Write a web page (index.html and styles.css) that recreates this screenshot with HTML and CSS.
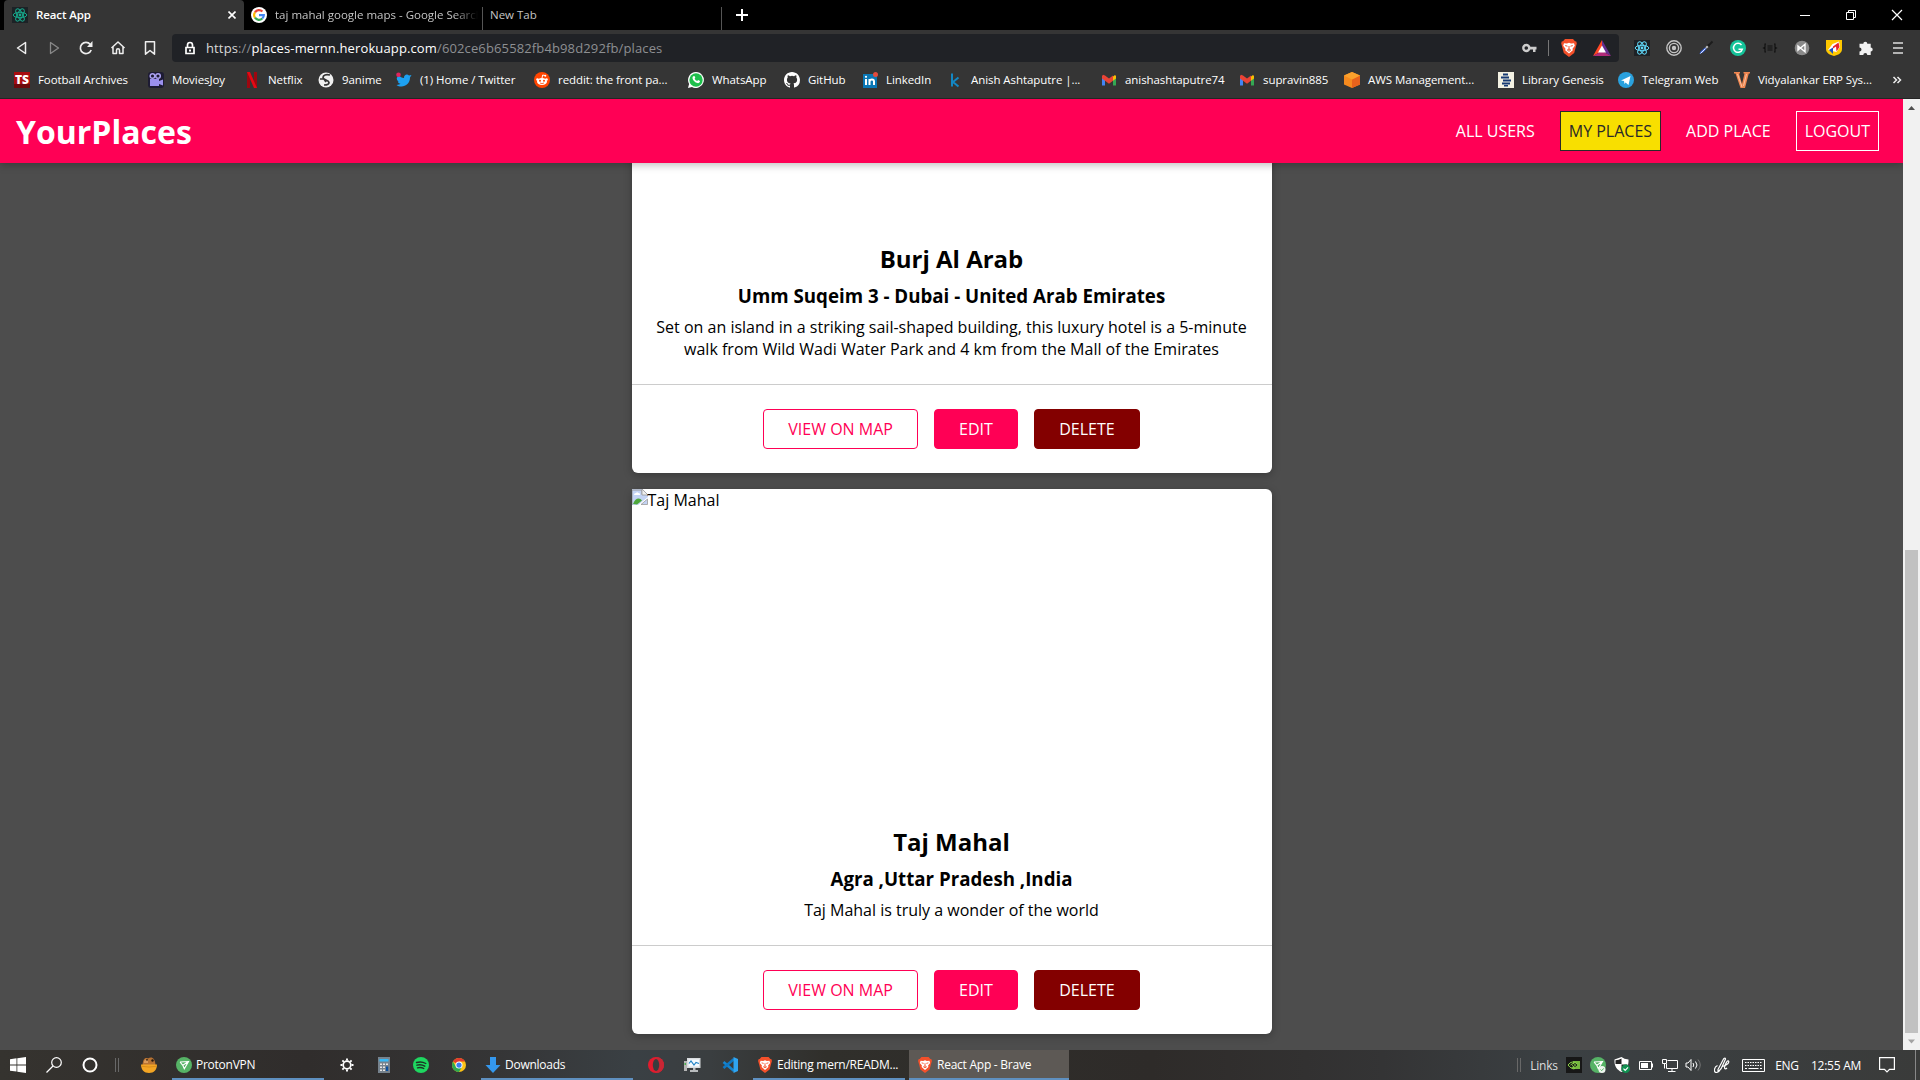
FILE: index.html
```html
<!DOCTYPE html>
<html lang="en">
<head>
<meta charset="utf-8">
<title>React App</title>
<link rel="stylesheet" href="styles.css">
</head>
<body>
<svg class="defs" width="0" height="0">
  <symbol id="brave" viewBox="0 0 16 18"><path d="M4 0h8l2 2.200 1.300.3.500 2-1 3.500-1.600 6L8 18l-5.200-4L1.200 8 .2 4.500l.5-2L2 2.200z" fill="#f4502a"/><path d="M3 4.200l3 .3 2-.8 2 .8 3-.3.800 2.500-2.300 3 .3 1.600L8 14.500l-3.800-3.200.3-1.600-2.300-3z" fill="#fff"/><path d="M4.200 6.600l2.300.6M11.800 6.600l-2.300.6M8 7v3M6.300 11L8 10l1.700 1L8 12.300z" stroke="#f4502a" fill="none"/></symbol>
  <symbol id="react" viewBox="0 0 16 16"><g fill="none" stroke="currentColor"><ellipse cx="8" cy="8" rx="6.800" ry="2.700"/><ellipse cx="8" cy="8" rx="6.800" ry="2.700" transform="rotate(60 8 8)"/><ellipse cx="8" cy="8" rx="6.800" ry="2.700" transform="rotate(120 8 8)"/></g><circle cx="8" cy="8" r="1.400" fill="currentColor"/></symbol>
  <symbol id="gmail" viewBox="0 0 16 16"><path d="M1 4v9.500h3V6z" fill="#4285f4"/><path d="M15 4v9.500h-3V6z" fill="#34a853"/><path d="M12 4.500L14 3l1 1v2.500l-3 2.300z" fill="#fbbc04"/><path d="M1 4l1-1.200 2 .7 4 3 4-3v5.300l-4 3-4-3L1 6.500z" fill="#ea4335"/></symbol>
  <symbol id="proton" viewBox="0 0 16 16"><circle cx="8" cy="8" r="8" fill="#56b366"/><path d="M4 5l8.500-.5-4.200 7.200L6.800 8.300 4 5M6.800 8.300l5.700-3.800" fill="none" stroke="#fff" stroke-width="1.100"/></symbol>
</svg>
<div class="screen">
  <div class="tabs">
    <div class="tab tab-active"><svg class="fav dark-fav" width="16" height="16"><use href="#react"/></svg><span>React App</span><svg class="tab-x" width="8" height="8" viewBox="0 0 8 8"><path d="M.5.5l7 7M7.500.5l-7 7" stroke="#fff" stroke-width="1.600"/></svg></div>
    <div class="tab tab-google"><svg width="16" height="16" viewBox="0 0 16 16"><circle cx="8" cy="8" r="8" fill="#fff"/><g fill="none" stroke-width="2.200"><path d="M4 5.300A4.800 4.800 0 0 1 11.400 4.600" stroke="#ea4335"/><path d="M4 5.300a4.800 4.800 0 0 0 0 5.400" stroke="#fbbc05"/><path d="M4 10.700a4.800 4.800 0 0 0 7.300.8" stroke="#34a853"/><path d="M11.300 11.500A4.800 4.800 0 0 0 12.800 8.200H8" stroke="#4285f4"/></g></svg><span class="fade">taj mahal google maps - Google Search</span></div>
    <div class="tab tab-new"><span>New Tab</span></div>
    <svg class="plus" width="12" height="12" viewBox="0 0 12 12"><path d="M6 0v12M0 6h12" stroke="#fff" stroke-width="2"/></svg>
    <div class="win">
      <svg width="12" height="12" viewBox="0 0 12 12"><path d="M1 6.500h10" stroke="#fff"/></svg>
      <svg width="12" height="12" viewBox="0 0 12 12"><path d="M1.500 3.500h7v7h-7zM3.500 3.500v-2h7v7h-2" fill="none" stroke="#fff"/></svg>
      <svg width="12" height="12" viewBox="0 0 12 12"><path d="M1 1l10 10M11 1L1 11" stroke="#fff" stroke-width="1.200"/></svg>
    </div>
  </div>
  <div class="toolbar">
    <div class="cells">
      <svg width="16" height="16" viewBox="0 0 16 16"><path d="M11.500 2.500v11L3.500 8z" fill="none" stroke="#eee" stroke-width="1.500" stroke-linejoin="round"/></svg>
      <svg width="16" height="16" viewBox="0 0 16 16"><path d="M4.500 2.500v11l8-5.500z" fill="none" stroke="#888" stroke-width="1.300" stroke-linejoin="round"/></svg>
      <svg width="16" height="16" viewBox="0 0 16 16"><path d="M13.200 10A5.600 5.600 0 1 1 12.300 4.500" fill="none" stroke="#eee" stroke-width="1.700"/><path d="M14.500 1v6H9z" fill="#eee"/></svg>
      <svg width="16" height="16" viewBox="0 0 16 16"><path d="M1.500 8L8 2l6.500 6M3 7v6.500h3.500V10.300a1.500 1.500 0 0 1 3 0v3.200H13V7" fill="none" stroke="#eee" stroke-width="1.500" stroke-linejoin="round"/></svg>
      <svg width="16" height="16" viewBox="0 0 16 16"><path d="M3.500 1.800h9v12.400L8 10.500l-4.500 3.700z" fill="none" stroke="#eee" stroke-width="1.500" stroke-linejoin="round"/></svg>
    </div>
    <div class="url">
      <svg class="lock" width="12" height="14" viewBox="0 0 12 14"><path d="M3.500 6V4a2.500 2.500 0 0 1 5 0v2M2 6.500h8v6H2z" fill="none" stroke="#fff" stroke-width="1.700"/><path d="M6 8.500v2" stroke="#fff" stroke-width="2"/></svg>
      <span class="address"><i>https</i>://<b>places-mernn.herokuapp.com</b>/602ce6b65582fb4b98d292fb/places</span>
      <svg class="key" width="15" height="12" viewBox="0 0 15 12"><path d="M7 4.700h7.500v2.800H13.500V10H11V7.500H7" fill="#ccc"/><circle cx="4.300" cy="6" r="3" fill="none" stroke="#ccc" stroke-width="2.400"/></svg>
      <span class="vbar"></span>
      <svg class="shield" width="16" height="18"><use href="#brave"/></svg>
      <svg width="18" height="16" viewBox="0 0 18 16"><path d="M9 0l9 16-9-5z" fill="#662d91"/><path d="M9 0L0 16l9-5z" fill="#ff4724"/><path d="M0 16h18l-9-5z" fill="#b12a7a"/><path d="M9 5.500l4 7H5z" fill="#fff"/></svg>
    </div>
    <div class="cells ext">
      <svg class="dark-fav blue" width="16" height="16"><use href="#react"/></svg>
      <svg width="16" height="16" viewBox="0 0 16 16"><g fill="none" stroke="#c4c4c4" stroke-width="1.400"><circle cx="8" cy="8" r="7.200"/><circle cx="8" cy="8" r="4.600"/></g><circle cx="8" cy="8" r="2.200" fill="#c4c4c4"/></svg>
      <svg width="16" height="16" viewBox="0 0 16 16"><path d="M1.500 14l1-2.500L7 7.500 8.500 9 5 12.500z" fill="#3a63d8"/><path d="M2.500 13.500l5-5" stroke="#e4e9ff"/><path d="M8 8l2.500-2.500" stroke="#bbb" stroke-width="2"/><path d="M9.500 4.500l2 2M11 5l3.500-3.500" stroke="#1c1c1c" stroke-width="1.800"/></svg>
      <svg width="16" height="16" viewBox="0 0 16 16"><circle cx="8" cy="8" r="8" fill="#15c39a"/><path d="M11.500 5a4.500 4.500 0 1 0 .8 4.200H8.500" fill="none" stroke="#fff" stroke-width="1.500"/></svg>
      <svg width="16" height="16" viewBox="0 0 16 16"><path d="M4 4H3v3.300L1.700 8 3 8.700V12h1M12 4h1v3.300l1.300.7-1.300.7V12h-1M5.500 6h5M5.500 8h5M5.500 10h5" fill="none" stroke="#111" stroke-width="1.200"/></svg>
      <svg width="16" height="16" viewBox="0 0 16 16"><circle cx="8" cy="8" r="7.300" fill="#8a8a8a"/><path d="M4 6v4.200L6.300 8zM6.500 8L11 4.300v7.400z" fill="none" stroke="#fff" stroke-width="1.400"/></svg>
      <svg width="16" height="16" viewBox="0 0 16 16"><path d="M0 0h16v9c0 4-4 6-8 7-4-1-8-3-8-7z" fill="#ffc800"/><path d="M2 10L6.500 4l6.500-2.500 1 5.500-3.500 5z" fill="#fff"/><path d="M7 6.500L12.500 2.500 13.500 7l-3 4.500-.5-5-3 2z" fill="#e8232c"/><path d="M7 7.500L3 10l4 4z" fill="#1b4fc4"/></svg>
      <svg width="16" height="16" viewBox="0 0 16 16"><path d="M1.500 3.800h3.800a2 2 0 1 1 4 0h3.400v3.700a2 2 0 1 1 0 4v3.500H9.300a2 2 0 0 0-4 0H1.500v-3.500a2 2 0 0 0 0-4z" fill="#f2f2f2"/></svg>
      <svg width="16" height="16" viewBox="0 0 16 16"><path d="M3 3h10M3 8h10M3 13h10" stroke="#ddd" stroke-width="1.700"/></svg>
    </div>
  </div>
  <div class="bookmarks">
    <div class="bm"><svg width="16" height="16" viewBox="0 0 16 16"><path d="M0 0h16v16H0z" fill="#a80d10"/><path d="M0 12h16v4H0z" fill="#6d0a0c"/><text class="ts" x="8" y="11.500" text-anchor="middle">TS</text></svg><span>Football Archives</span></div>
    <div class="bm"><svg width="16" height="16" viewBox="0 0 16 16"><rect width="16" height="16" rx="3" fill="#1d1b33"/><circle cx="4.500" cy="4" r="2.300" fill="none" stroke="#aaa1f0" stroke-width="1.500"/><circle cx="10" cy="4" r="2.300" fill="none" stroke="#aaa1f0" stroke-width="1.500"/><path d="M2 7h9v2l4-1.500v6L11 12v2H2z" fill="#9b90ee"/></svg><span>MoviesJoy</span></div>
    <div class="bm"><svg width="16" height="16" viewBox="0 0 16 16"><path d="M3 0h3v16H3zM10 0h3v16h-3z" fill="#9d0710"/><path d="M3 0h3l7 16h-3z" fill="#e50914"/></svg><span>Netflix</span></div>
    <div class="bm"><svg width="16" height="16" viewBox="0 0 16 16"><circle cx="8" cy="8" r="7.500" fill="#f0f0f0"/><path d="M12 3c-4-1-7 0-7 2.500S11 8 11 10.500 8 13 6 13M2 7h4l2 3" fill="none" stroke="#333" stroke-width="1.700"/></svg><span>9anime</span></div>
    <div class="bm"><svg width="16" height="16" viewBox="0 0 16 16"><path d="M2.500 3C4 5 6 6 8 6c-.3-3 3-4.500 5-2.500L15.500 3 14 5.500C14 11 10 14.500 5.500 14.500c-2 0-3.500-.5-5-1.500 2 0 3-.5 4-1.200C3 11.500 2 10.500 1.800 9.500h1C1 8.500.8 7.500.8 6z" fill="#1da1f2"/><circle cx="2.500" cy="2.700" r="2.300" fill="#e0245e"/></svg><span>(1) Home / Twitter</span></div>
    <div class="bm"><svg width="16" height="16" viewBox="0 0 16 16"><circle cx="8" cy="8" r="8" fill="#ff4500"/><ellipse cx="8" cy="9.500" rx="5" ry="3.600" fill="#fff"/><circle cx="3.500" cy="7.500" r="1.300" fill="#fff"/><circle cx="12.500" cy="7.500" r="1.300" fill="#fff"/><path d="M8 6l.7-3 2.300.5" stroke="#fff" fill="none"/><circle cx="11.300" cy="3.700" r="1" fill="#fff"/><circle cx="6" cy="8.800" r="1" fill="#ff4500"/><circle cx="10" cy="8.800" r="1" fill="#ff4500"/><path d="M6 11q2 1.200 4 0" stroke="#ff4500" fill="none" stroke-width=".8"/></svg><span>reddit: the front pa...</span></div>
    <div class="bm"><svg width="16" height="16" viewBox="0 0 16 16"><path d="M8 0a8 8 0 1 1-4 15L0 16l1.100-4A8 8 0 0 1 8 0z" fill="#fff"/><circle cx="8" cy="8" r="6.700" fill="#1fc04c"/><path d="M5.300 4.200L6.500 4l.8 1.800-.7 1c.6 1.100 1.500 1.800 2.600 2.300l.9-1 1.900.9c0 1.500-1.300 2.300-2.500 2.100C7 10.600 5 8.600 4.500 6.300c-.1-.9.300-1.700.8-2.100z" fill="#fff"/></svg><span>WhatsApp</span></div>
    <div class="bm"><svg width="16" height="16" viewBox="0 0 16 16"><path d="M8 0C3.580 0 0 3.580 0 8c0 3.540 2.290 6.530 5.470 7.590.4.070.55-.17.55-.38 0-.19-.01-.82-.01-1.490-2.010.37-2.530-.49-2.690-.94-.09-.23-.48-.94-.82-1.130-.28-.15-.68-.52-.01-.53.63-.01 1.080.58 1.230.82.72 1.210 1.870.87 2.330.66.07-.52.28-.87.510-1.070-1.780-.2-3.640-.89-3.640-3.950 0-.87.31-1.590.82-2.150-.08-.2-.36-1.020.08-2.120 0 0 .67-.21 2.200.82a7.600 7.600 0 0 1 4 0c1.530-1.040 2.200-.82 2.200-.82.44 1.100.16 1.920.08 2.120.51.56.82 1.270.82 2.150 0 3.070-1.870 3.750-3.650 3.950.29.25.54.73.54 1.480 0 1.070-.01 1.930-.01 2.200 0 .21.15.46.55.38A8 8 0 0 0 16 8c0-4.420-3.580-8-8-8z" fill="#fff"/></svg><span>GitHub</span></div>
    <div class="bm"><svg width="16" height="16" viewBox="0 0 16 16"><path d="M1 2h14v14H1z" fill="#0a77b5"/><path d="M4 7v6M7.500 7v6M7.500 9.500C8 6.800 12 6.800 12 9.500V13" fill="none" stroke="#fff" stroke-width="2"/><circle cx="4" cy="4.800" r="1.100" fill="#fff"/><circle cx="13.500" cy="2.500" r="2.500" fill="#e34b3d"/></svg><span>LinkedIn</span></div>
    <div class="bm"><svg width="16" height="16" viewBox="0 0 16 16"><path d="M5 1.500v13M11.500 5.500L6 10l5.500 4.500" fill="none" stroke="#1387c4" stroke-width="2"/></svg><span>Anish Ashtaputre |...</span></div>
    <div class="bm"><svg width="16" height="16"><use href="#gmail"/></svg><span>anishashtaputre74</span></div>
    <div class="bm"><svg width="16" height="16"><use href="#gmail"/></svg><span>supravin885</span></div>
    <div class="bm"><svg width="16" height="16" viewBox="0 0 16 16"><path d="M8 0l8 3.500v9L8 16l-8-3.500v-9z" fill="#f68a1e"/><path d="M8 7.500l8-4v9L8 16z" fill="#e8621c"/><path d="M0 3.500L8 0l8 3.500-8 4z" fill="#fba12c"/></svg><span>AWS Management...</span></div>
    <div class="bm"><svg width="16" height="16" viewBox="0 0 16 16"><path d="M0 0h16v16H0z" fill="#f3f1e2"/><path d="M5 1.500h5v2H5zM3 4.500h8v2H3zM5 7.500h8v2H5zM4 10.500h8v2H4zM6 13h4v1.500H6z" fill="#173a73"/></svg><span>Library Genesis</span></div>
    <div class="bm"><svg width="16" height="16" viewBox="0 0 16 16"><circle cx="8" cy="8" r="8" fill="#2aa1de"/><path d="M3 8.500L12.500 4l-2 9-3-2.500-1 1.500-.5-3z" fill="#fff"/></svg><span>Telegram Web</span></div>
    <div class="bm"><svg width="16" height="16" viewBox="0 0 16 16"><path d="M0 0h6v1.500H5L8 12l2.500-10.500H9.500V0H16v1.500h-1.200L11 16H6.500L1.500 1.500H0z" fill="#f08650"/><path d="M3.500 2L8 15M12.500 2L9.500 14" stroke="#fbd0b5" stroke-width=".8"/></svg><span>Vidyalankar ERP Sys...</span></div>
    <svg class="more" width="10" height="10" viewBox="0 0 10 10"><path d="M1.500 2l3 3-3 3M5.500 2l3 3-3 3" fill="none" stroke="#eee" stroke-width="1.500"/></svg>
  </div>
  <div class="viewport">
    <div class="page">
      <header class="header"><h1>YourPlaces</h1><nav><a>ALL USERS</a><a class="current">MY PLACES</a><a>ADD PLACE</a><a class="outlined">LOGOUT</a></nav></header>
      <main class="places">
        <article class="card">
          <div class="photo"></div>
          <div class="info"><h2>Burj Al Arab</h2><h3>Umm Suqeim 3 - Dubai - United Arab Emirates</h3><p>Set on an island in a striking sail-shaped building, this luxury hotel is a 5-minute walk from Wild Wadi Water Park and 4 km from the Mall of the Emirates</p></div>
          <div class="actions"><button class="btn inverse">VIEW ON MAP</button><button class="btn">EDIT</button><button class="btn danger">DELETE</button></div>
        </article>
        <article class="card">
          <div class="photo"><svg width="16" height="16" viewBox="0 0 16 16"><path d="M0 0h10.500L16 5.500V8L6 16H0z" fill="#c3d3f4"/><path d="M0 16V1h10v4.500h5.500V7" fill="none" stroke="#9a9a9a"/><path d="M10 0v6h6z" fill="#eee" stroke="#9a9a9a" stroke-width=".8"/><path d="M2 6q0-2 2-2 1-1.500 2.500 0 2 0 1.500 2z" fill="#fff"/><path d="M1 15q3-7 7.500-5L10 11.500 5 15.500z" fill="#4ea83c"/><path d="M15.500 10v5.500H9z" fill="#c3d3f4" stroke="#9a9a9a" stroke-width=".8"/></svg><span>Taj Mahal</span></div>
          <div class="info"><h2>Taj Mahal</h2><h3>Agra ,Uttar Pradesh ,India</h3><p>Taj Mahal is truly a wonder of the world</p></div>
          <div class="actions"><button class="btn inverse">VIEW ON MAP</button><button class="btn">EDIT</button><button class="btn danger">DELETE</button></div>
        </article>
      </main>
    </div>
    <div class="scrollbar"><svg width="17" height="17" viewBox="0 0 17 17"><path d="M5 11h7L8.500 7z" fill="#505050"/></svg><div class="thumb"></div><svg width="17" height="17" viewBox="0 0 17 17"><path d="M5 6.500h7l-3.500 4z" fill="#a3a3a3"/></svg></div>
  </div>
  <footer class="taskbar">
    <div class="tasks">
      <div><svg width="16" height="16" viewBox="0 0 16 16"><path d="M0 2.200L6.500 1.300v6.200H0zM7.300 1.200L16 0v7.500H7.300zM0 8.400h6.500v6.200L0 13.700zM7.300 8.400H16V16l-8.700-1.200z" fill="#fff"/></svg></div>
      <div><svg width="16" height="16" viewBox="0 0 16 16"><circle cx="10.500" cy="5.500" r="4.800" fill="none" stroke="#fff" stroke-width="1.200"/><path d="M7 9l-6.500 6.500" stroke="#fff" stroke-width="1.300"/></svg></div>
      <div><svg width="16" height="16" viewBox="0 0 16 16"><circle cx="8" cy="8" r="6.500" fill="none" stroke="#fff" stroke-width="2"/></svg></div>
      <div><span class="grip"></span></div>
      <div><svg width="16" height="16" viewBox="0 0 16 16"><path d="M1.500 8C2 2 4 0 7 1.500 10-.5 14 0 14.500 8z" fill="#b87333"/><path d="M3 4q2-3 4-1v3H3z" fill="#d99a5b"/><circle cx="11.500" cy="3.500" r="1.200" fill="#26180c"/><circle cx="6" cy="2.800" r=".9" fill="#26180c"/><path d="M0 7.500h16c0 5-3 8.500-8 8.500S0 12.500 0 7.500z" fill="#f3a524"/><path d="M1 9.300q7 1.500 14 0" fill="none" stroke="#d98d1b"/></svg></div>
      <div></div>
      <div class="task"><svg width="16" height="16"><use href="#proton"/></svg><span>ProtonVPN</span></div>
      <div></div>
      <div><svg width="14" height="14" viewBox="0 0 14 14"><circle cx="7" cy="7" r="3.800" fill="none" stroke="#fff" stroke-width="1.700"/><path d="M7 .5v2M7 11.500v2M.5 7h2M11.500 7h2M2.400 2.400l1.400 1.400M10.200 10.200l1.400 1.400M11.600 2.400l-1.400 1.400M3.800 10.200l-1.400 1.400" stroke="#fff" stroke-width="1.900"/></svg></div>
      <div><svg width="12" height="16" viewBox="0 0 12 16"><path d="M0 0h12v16H0z" fill="#76828d"/><path d="M1.500 2h9v2.500h-9z" fill="#35b8f5"/><path d="M2 6.500h2V8H2zM5 6.500h2V8H5zM8 6.500h2V8H8zM2 9.500h2V11H2zM5 9.500h2V11H5zM2 12.500h2V14H2zM5 12.500h2V14H5z" fill="#e6e6e6"/><path d="M8 9.500h2.200v4.500H8z" fill="#0b4f9e"/></svg></div>
      <div><svg width="16" height="16" viewBox="0 0 16 16"><circle cx="8" cy="8" r="8" fill="#1ed760"/><path d="M3.500 5.500Q8.500 4 12.800 6.500M4 8.200q4-1.300 7.800 1M4.500 10.800q3.500-1 6.300.7" fill="none" stroke="#1d3323" stroke-width="1.400" stroke-linecap="round"/></svg></div>
      <div><svg width="14" height="14" viewBox="0 0 16 16"><circle cx="8" cy="8" r="8" fill="#fbc116"/><path d="M8 8L1.100 4A8 8 0 0 1 15 4H8z" fill="#e33b2e"/><path d="M1.100 4A8 8 0 0 0 8 16l3.500-6L8 8 4.500 10z" fill="#2da94f"/><circle cx="8" cy="8" r="4" fill="#fff"/><circle cx="8" cy="8" r="3" fill="#3b7ded"/></svg></div>
      <div></div>
      <div class="task"><svg width="16" height="16" viewBox="0 0 16 16"><path d="M5 0h6v8h4.500L8 16 .5 8H5z" fill="#3498ee"/></svg><span>Downloads</span></div>
      <div></div>
      <div><svg width="16" height="16" viewBox="0 0 16 16"><circle cx="8" cy="8" r="8" fill="#e31b2d"/><path d="M8 0a8 8 0 0 1 0 16z" fill="#c92634"/><ellipse cx="8" cy="8" rx="3.200" ry="6" fill="#3a3c3e"/></svg></div>
      <div><svg width="17" height="16" viewBox="0 0 17 16"><path d="M0 4h3v10H0z" fill="#b5b5b5"/><path d="M3 1h13.500v10H3z" fill="#d8dcdf"/><path d="M4.500 2.500H15v7H4.500z" fill="#f5fbff"/><path d="M5 6.500l2-2.500 3 4 2-2.500 3 1" fill="none" stroke="#2183c5" stroke-width="1.200"/><path d="M9 11h2.500v2H14v2H6v-2h3z" fill="#b9bcbe"/><path d="M.5 6h1.500v2H.5z" fill="#4caf50"/></svg></div>
      <div><svg width="16" height="16" viewBox="0 0 16 16"><path d="M1.500 5L12 14" stroke="#1485d0" stroke-width="2.600"/><path d="M1.500 11L12 2" stroke="#0e78c4" stroke-width="2.600"/><path d="M11.500 0L16 2v12l-4.500 2z" fill="#2fa5f2"/></svg></div>
      <div></div>
      <div class="task"><svg width="16" height="16"><use href="#brave"/></svg><span>Editing mern/READM...</span></div>
      <div></div>
      <div class="task task-active"><svg width="16" height="16"><use href="#brave"/></svg><span>React App - Brave</span></div>
    </div>
    <div class="tray">
      <div><span class="grip"></span></div>
      <div class="links">Links</div>
      <div><svg width="16" height="16" viewBox="0 0 16 16"><path d="M0 0h16v16H0z" fill="#171717"/><path d="M7 4h7v8H7z" fill="#76b83f"/><path d="M2 8q4-5.500 9-1-2 4-5.500 3.500M2 8q4 5 7 3.500M4.500 8Q7 5 9 7.500 7.500 10 6 8" fill="none" stroke="#8bd448"/><path d="M7 8q2-3 4 0-2 3-4 0" fill="none" stroke="#171717"/></svg></div>
      <div><svg width="16" height="16"><use href="#proton"/><circle cx="12" cy="12.500" r="3.500" fill="#eef7ef"/><path d="M10.500 12.500l1.200 1.200 2-2.300" fill="none" stroke="#56b366"/></svg></div>
      <div><svg width="16" height="16" viewBox="0 0 16 16"><path d="M7.500 0Q10 2 14.500 2.500C15 9 12 13 7.500 15 3 13 0 9 .5 2.500 5 2 7.500 0z" fill="#fff"/><path d="M7.500 1.500V7H1.500V3.200Q5 3 7.500 1.500zM7.500 7.500h6q-1 4.500-6 6.500z" fill="#222"/><circle cx="11.700" cy="11.700" r="4.300" fill="#109050"/><path d="M9.500 11.700l1.700 1.700 2.800-3" fill="none" stroke="#fff" stroke-width="1.200"/></svg></div>
      <div><svg width="16" height="16" viewBox="0 0 16 16"><path d="M1.500 4.500h12v8h-12zM14.500 6.500v4" fill="none" stroke="#fff"/><path d="M3 6h7v5H3z" fill="#fff"/></svg></div>
      <div><svg width="16" height="16" viewBox="0 0 16 16"><path d="M5.500 3.500h10v8h-11V7M10 11.500v3M6 14.500h7.500M.5 2.500h4v4h-4zM2.500 6.500v5" fill="none" stroke="#fff"/></svg></div>
      <div><svg width="17" height="16" viewBox="0 0 17 16"><path d="M1 6h2l3-3.500v11L3 10H1z" fill="none" stroke="#fff"/><path d="M8 6q1.500 2 0 4M10.500 4.500q3 3.500 0 7" fill="none" stroke="#fff"/><path d="M13 2.500q4.500 5.500 0 11" fill="none" stroke="#777"/></svg></div>
      <div><svg width="16" height="16" viewBox="0 0 16 16"><path d="M4 12.500L9.500 2q2-2 2 0L7 12l-3 2.500zM3.500 8.500C0 10-.5 15 2 15.500c2.500 0 4-2 5-4M8.500 9.500c5-1.500 7-4 6-5.500-1-1-3.500 3-4 6.500 0 2 1.500 1.500 2.500.5" fill="none" stroke="#fff" stroke-width="1.200"/></svg></div>
      <div><svg width="23" height="13" viewBox="0 0 23 13"><path d="M.5.5h22v12H.5z" fill="none" stroke="#fff"/><path d="M3 3.500h17M3 6.500h17" stroke="#fff" stroke-dasharray="1.500 1"/><path d="M3 9.500h2M6.500 9.500h10M18 9.500h2" stroke="#fff"/></svg></div>
      <div>ENG</div>
      <div>12:55 AM</div>
      <div><svg width="16" height="16" viewBox="0 0 16 16"><path d="M.6.600h14.800v11.800H10.500L8 15l-2.500-2.600H.6z" fill="none" stroke="#fff" stroke-width="1.200"/></svg></div>
      <div class="peek"></div>
    </div>
  </footer>
</div>
</body>
</html>
```
FILE: styles.css
```css
* { box-sizing: border-box; }
body { margin: 0; background: #000; font-family: "Open Sans", "Noto Sans", sans-serif; overflow: hidden; }
svg { display: block; flex: none; }
.defs { position: absolute; }
.screen { width: 1920px; height: 1080px; display: flex; flex-direction: column; overflow: hidden; }

/* Browser tabs */
.tabs { flex: none; height: 30px; background: #000; padding-left: 4px; display: flex; align-items: center; color: #c4c4c4; font-size: 11.5px; white-space: nowrap; }
.tab { height: 30px; display: flex; align-items: center; }
.tab span { margin-top: -1px; }
.tab-active { width: 240px; padding: 0 8px; gap: 8px; background: #353535; color: #fff; border-radius: 4px 4px 0 0; font-weight: 600; letter-spacing: -.1px; }
.tab-x { margin-left: auto; }
.tab-google { width: 239px; height: 23px; margin-top: 7px; padding: 0 4px 7px 7px; gap: 8px; border-right: 1px solid #555; }
.fade { width: 203px; overflow: hidden; -webkit-mask-image: linear-gradient(to right, #000 88%, transparent); mask-image: linear-gradient(to right, #000 88%, transparent); }
.tab-new { width: 239px; height: 23px; margin-top: 7px; padding: 0 7px 7px; border-right: 1px solid #555; }
.plus { margin-left: 14px; }
.win { margin-left: auto; width: 138px; display: grid; grid-template-columns: repeat(3, 46px); justify-items: center; }
.dark-fav { background: #1c2226; color: #18a98c; }
.dark-fav.blue { color: #61dafb; background: #1e2125; }

/* Address bar */
.toolbar { flex: none; height: 36px; background: #353535; padding-left: 6px; display: flex; align-items: center; }
.cells { display: grid; grid-auto-flow: column; grid-auto-columns: 32px; justify-items: center; align-items: center; }
.ext { margin-left: 7px; }
.url { width: 1447px; height: 28px; margin-left: 6px; padding: 0 8px 0 12px; background: #202226; border-radius: 4px; display: flex; align-items: center; }
.address { margin-left: 10px; font-size: 13px; letter-spacing: .13px; color: #8d8f92; }
.address i { font-style: normal; color: #d8d8d8; }
.address b { font-weight: 400; color: #fff; }
.key { margin-left: auto; }
.vbar { width: 1px; height: 16px; margin: 0 12px 0 11px; background: #777; }
.shield { margin-right: 16px; }

/* Bookmarks */
.bookmarks { flex: none; height: 33px; padding-left: 14px; padding-bottom: 4px; background: #353535; border-bottom: 1px solid #252525; display: grid; grid-template-columns: 134px 96px 74px 78px 138px 154px 96px 78px 85px 154px 138px 105px 154px 120px 116px 157px auto; align-items: center; color: #fff; font-size: 11.5px; letter-spacing: -.07px; white-space: nowrap; }
.bm { display: flex; align-items: center; gap: 8px; }
.bm span { margin-top: -2px; }
.more { margin-left: 1px; }
.ts { font: 800 12px "Open Sans", sans-serif; fill: #fff; }

/* Page */
.viewport { flex: 1; min-height: 0; display: flex; }
.page { flex: 1; display: flex; flex-direction: column; background: #4d4d4d; overflow: hidden; }
.header { flex: none; height: 64px; padding: 0 24px 0 16px; background: #ff0055; box-shadow: 0 2px 8px rgba(0,0,0,.26); display: flex; align-items: center; justify-content: space-between; z-index: 1; }
.header h1 { margin: 2px 0 0; color: #fff; font-size: 32px; line-height: 44px; }
nav { display: flex; gap: 16px; }
nav a { padding: 8px; border: 1px solid transparent; color: #fff; font-size: 16px; line-height: 22px; }
nav .current { background: #f8df00; border-color: #292929; color: #292929; }
nav .outlined { border-color: #fff; }
.places { flex: 1; min-height: 0; padding-bottom: 16px; display: flex; flex-direction: column; align-items: center; justify-content: flex-end; gap: 16px; }
.card { flex: none; width: 640px; background: #fff; border-radius: 6px; box-shadow: 0 2px 8px rgba(0,0,0,.26); }
.photo { height: 320px; display: flex; font-size: 16px; line-height: 22px; }
.info { padding: 16px; text-align: center; color: #000; }
.info h2, .info h3, .info p { margin: 0 0 8px; }
.info h2 { font-size: 24px; line-height: 33px; }
.info h3 { font-size: 18.720px; line-height: 25px; }
.info p { font-size: 16px; line-height: 22px; }
.actions { padding: 24px; border-top: 1px solid #ccc; display: flex; justify-content: center; gap: 16px; }
.btn { height: 40px; padding: 0 24px; border: 1px solid #ff0055; border-radius: 4px; background: #ff0055; color: #fff; font: inherit; }
.inverse { width: 155px; background: transparent; color: #ff0055; }
.danger { width: 106px; background: #830000; border-color: #830000; }
.scrollbar { width: 17px; background: #f1f1f1; display: flex; flex-direction: column; align-items: center; }
.thumb { width: 13px; height: 483px; margin-top: auto; background: #c1c1c1; }

/* Taskbar */
.taskbar { flex: none; height: 30px; display: flex; justify-content: space-between; color: #fff; font-size: 12px; letter-spacing: -.25px; white-space: nowrap; background: linear-gradient(to right, #35332f 0, #302d2c 16%, #353536 26%, #3a4044 33%, #3a3e40 37%, #302f2b 43%, #2e2b29 60%, #343435 72%, #3b4043 81%, #3a3b3a 100%); }
.tasks { display: grid; grid-template-columns: 36px 36px 36px 17px 47px 0 152px 4px 38px 36px 38px 37px 4px 152px 4px 37px 37px 38px 4px 152px 4px 160px; }
.tasks > div, .tray > div { display: flex; align-items: center; justify-content: center; }
.tasks > .task { justify-content: flex-start; gap: 4px; padding: 0 4px; border-top: 2px solid transparent; border-bottom: 2px solid #5f90c0; }
.task span { margin-top: -1px; }
.tasks > .task-active { padding-left: 8px; background: #5d5955; }
.grip { width: 4px; height: 14px; border: solid #686868; border-width: 0 1px; }
.tray { display: grid; grid-template-columns: 19px 32px 28px 20px 28px 20px 28px 19px 38px 24px 44px 54px 48px 9px; }
.tray > .links { color: #ddd; }
.tray > .peek { justify-self: end; width: 5px; border-left: 1px solid #888; }
```
